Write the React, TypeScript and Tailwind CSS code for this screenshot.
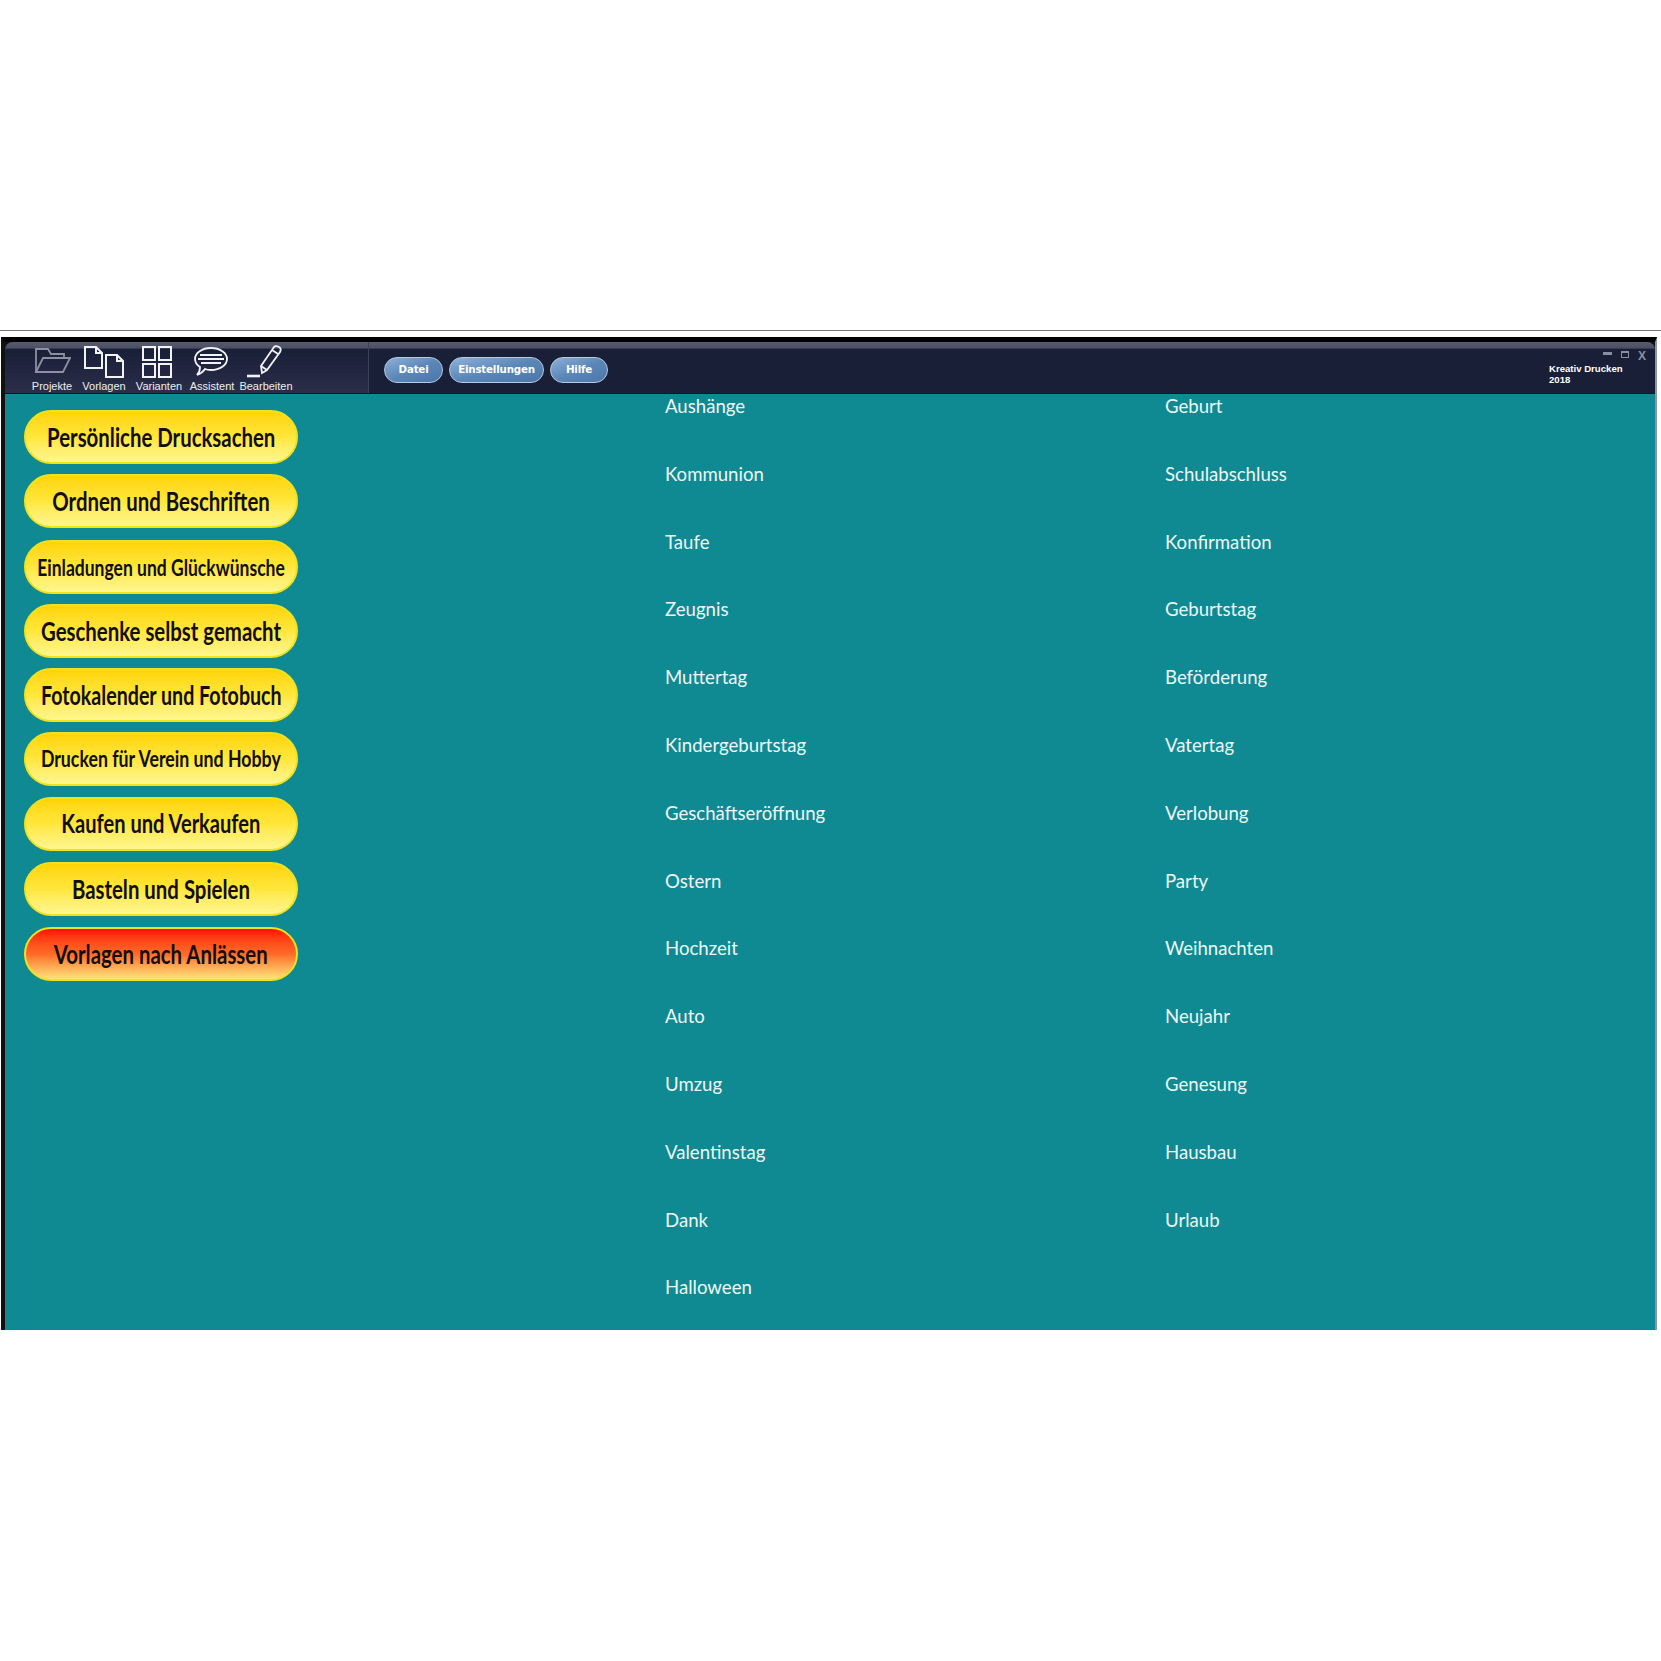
const sideButtons = [
  { label: "Persönliche Drucksachen", size: "text-[27px]", mt: "mt-0" },
  { label: "Ordnen und Beschriften", size: "text-[27px]", mt: "mt-[10px]" },
  { label: "Einladungen und Glückwünsche", size: "text-[23.2px]", mt: "mt-[12px]" },
  { label: "Geschenke selbst gemacht", size: "text-[27px]", mt: "mt-[10px]" },
  { label: "Fotokalender und Fotobuch", size: "text-[26px]", mt: "mt-[10px]" },
  { label: "Drucken für Verein und Hobby", size: "text-[23.5px]", mt: "mt-[10px]" },
  { label: "Kaufen und Verkaufen", size: "text-[26.6px]", mt: "mt-[11px]" },
  { label: "Basteln und Spielen", size: "text-[27px]", mt: "mt-[11px]" },
];

const leftList = [
  "Aushänge", "Kommunion", "Taufe", "Zeugnis", "Muttertag", "Kindergeburtstag", "Geschäftseröffnung",
  "Ostern", "Hochzeit", "Auto", "Umzug", "Valentinstag", "Dank", "Halloween",
];

const rightList = [
  "Geburt", "Schulabschluss", "Konfirmation", "Geburtstag", "Beförderung", "Vatertag", "Verlobung",
  "Party", "Weihnachten", "Neujahr", "Genesung", "Hausbau", "Urlaub",
];

const FolderIcon = () => (
  <svg width="38" height="30" viewBox="0 0 38 30" fill="none" stroke="#8d90a3" strokeWidth="1.8">
    <path d="M3 25V2h12l3 5h13v4" />
    <path d="M3 25l7-14h27l-7 14z" />
  </svg>
);

const DocsIcon = () => (
  <svg width="42" height="32" viewBox="0 0 42 32" fill="none" stroke="#f2f3f7" strokeWidth="2">
    <path d="M1 1h11l6 6v15H1z" />
    <path d="M12 1v6h6" />
    <path d="M22 9h11l6 6v16H22z" />
    <path d="M33 9v6h6" />
  </svg>
);

const GridIcon = () => (
  <svg width="32" height="32" viewBox="0 0 32 32" fill="none" stroke="#f2f3f7" strokeWidth="2">
    <rect x="2" y="1" width="12" height="13" />
    <rect x="18" y="1" width="12" height="13" />
    <rect x="2" y="18" width="12" height="13" />
    <rect x="18" y="18" width="12" height="13" />
  </svg>
);

const SpeechIcon = () => (
  <svg width="36" height="30" viewBox="0 0 36 30" fill="none" stroke="#f2f3f7" strokeWidth="1.8">
    <path d="M18 1c9 0 16 5 16 11s-7 11-16 11c-2 0-4 0-6-1-2 3-5 5-8 6 2-2 3-5 3-8-3-2-5-5-5-8C2 6 9 1 18 1z" />
    <path d="M7 8h22M5 12h26M8 16h20" />
  </svg>
);

const PenIcon = () => (
  <svg width="36" height="34" viewBox="0 0 36 34" fill="none" stroke="#f2f3f7" strokeWidth="1.8">
    <path d="M16 28l-1-7L28 2c1-1 3-1 5 0s2 3 1 5L21 25z" />
    <path d="M15 21l6 4M26 5l6 4" />
    <path d="M1 31h13" strokeWidth="2.6" />
  </svg>
);

const tools = [
  { label: "Projekte", icon: <FolderIcon />, w: "w-[48px]", shift: "ml-0" },
  { label: "Vorlagen", icon: <DocsIcon />, w: "w-[56px]", shift: "ml-[2px]" },
  { label: "Varianten", icon: <GridIcon />, w: "w-[54px]", shift: "-ml-[4px]" },
  { label: "Assistent", icon: <SpeechIcon />, w: "w-[52px]", shift: "-ml-[2px]" },
  { label: "Bearbeiten", icon: <PenIcon />, w: "w-[56px]", shift: "-ml-[5px]" },
];

const MenuButton = ({ label, w }: { label: string; w: string }) => (
  <div
    className={`${w} h-[26px] flex items-center justify-center rounded-[13px] border border-[#b9c9df] bg-gradient-to-br from-[#8eb1d8] via-[#5b87b8] to-[#4a76aa] text-[10.3px] font-bold text-white font-['DejaVu_Sans',sans-serif] tracking-[-0.2px]`}
  >
    {label}
  </div>
);

const SideButton = ({ label, size, mt, red }: { label: string; size: string; mt: string; red?: boolean }) => (
  <div
    className={`${mt} w-[274px] h-[54px] flex items-center justify-center overflow-hidden rounded-[27px] border-2 border-[#f2e21c] bg-gradient-to-b ${
      red ? "from-[#ff0000] via-[#ff6a28] to-[#ffe27a]" : "from-[#ffd400] via-[#ffe73a] to-[#fff68e]"
    }`}
  >
    <span className={`${size} scale-x-[0.755] whitespace-nowrap font-bold text-[#120e08] font-['Lato',sans-serif]`}>{label}</span>
  </div>
);

const ListColumn = ({ items, w }: { items: string[]; w: string }) => (
  <ul className={`${w} flex flex-col -mt-[1px]`}>
    {items.map((item) => (
      <li key={item} className="h-[67.8px] shrink-0 text-[18.6px] leading-[26px] text-[#eef8f6] font-['Lato',sans-serif]">
        {item}
      </li>
    ))}
  </ul>
);

export default function App() {
  return (
    <div className="w-[1661px] h-[1661px] bg-white pt-[330px]">
      <div className="w-[1661px] h-[1000px] border-t border-[#777] pt-[6px] pl-[1px] pr-[4px]">
        <div className="h-[993px] flex flex-col bg-[#111] border-t-[5px] border-l-[4px] border-t-black border-l-[#111] border-r-[2px] border-r-[#8a9a9c]">
          {/* barra de titulo */}
          <header className="h-[52px] shrink-0 flex rounded-t-[8px] bg-[#1a1f38] bg-gradient-to-b from-[#585c70] from-[0%] via-[#4b4f64] via-[12%] to-[#1a1f38] to-[14%] border-b border-[#0e1530]">
            <div className="w-[364px] h-full flex border-r border-[#3c4058] pl-[23px] bg-gradient-to-b from-transparent from-[14%] to-[#2a2e49]">
              {tools.map((t) => (
                <div key={t.label} className={`${t.w} flex flex-col items-center pt-[4px]`}>
                  <div className={`${t.shift} h-[32px] flex items-center justify-center`}>{t.icon}</div>
                  <span className="text-[11px] leading-[12px] mt-[2px] whitespace-nowrap text-[#eceef4] font-['Liberation_Sans',sans-serif]">
                    {t.label}
                  </span>
                </div>
              ))}
            </div>
            <div className="flex gap-[6px] ml-[15px] mt-[15px] h-[26px]">
              <MenuButton label="Datei" w="w-[59px]" />
              <MenuButton label="Einstellungen" w="w-[95px]" />
              <MenuButton label="Hilfe" w="w-[58px]" />
            </div>
            <div className="ml-auto w-[106px] flex flex-col pt-[9px] pr-[9px]">
              <div className="flex justify-end items-start gap-[9px] h-[12px] text-[#8b8fa3]">
                <div className="w-[9px] h-[3px] mt-[1px] bg-[#8b8fa3]" />
                <div className="w-[8px] h-[7px] border border-t-2 border-[#8b8fa3]" />
                <span className="text-[12px] leading-[10px] font-bold font-['Liberation_Sans',sans-serif]">X</span>
              </div>
              <div className="text-[9.6px] leading-[11px] font-bold text-white font-['Liberation_Sans',sans-serif]">
                Kreativ Drucken
                <br />
                2018
              </div>
            </div>
          </header>

          <main className="flex-1 min-h-0 overflow-hidden flex bg-[#0f8a93]">
            <aside className="w-[660px] shrink-0 pl-[19px] pt-[16px] flex flex-col">
              {sideButtons.map((b) => (
                <SideButton key={b.label} label={b.label} size={b.size} mt={b.mt} />
              ))}
              <SideButton label="Vorlagen nach Anlässen" size="text-[27px]" mt="mt-[11px]" red />
            </aside>
            <ListColumn items={leftList} w="w-[500px]" />
            <ListColumn items={rightList} w="w-[400px]" />
          </main>
        </div>
      </div>
    </div>
  );
}
